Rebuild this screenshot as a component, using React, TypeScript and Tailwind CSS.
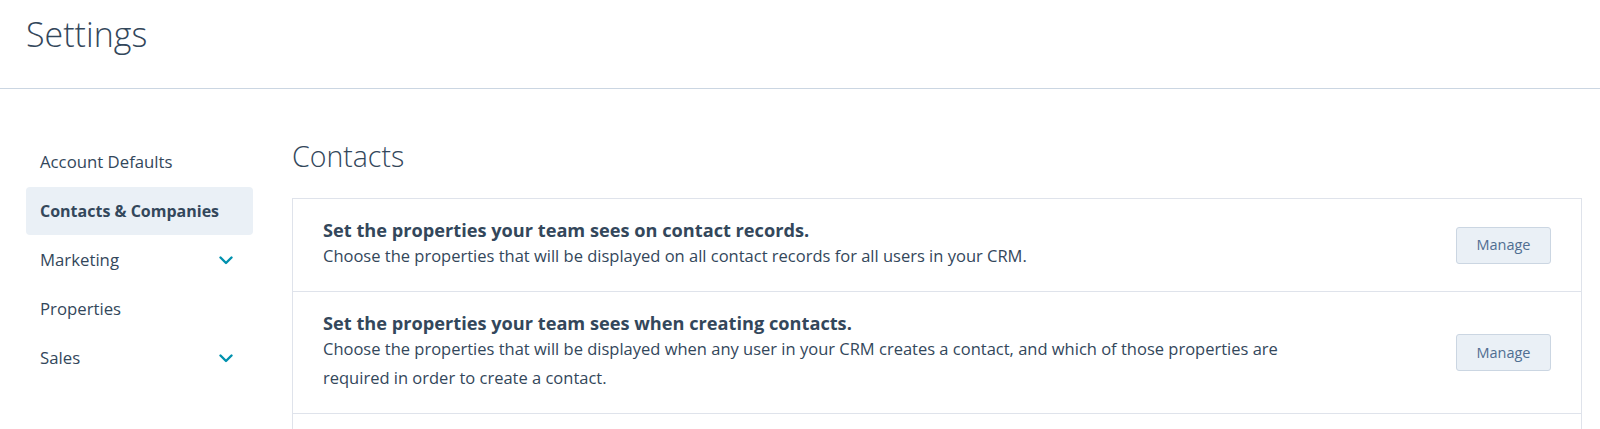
import React from 'react';

const navItems = [
  { label: 'Account Defaults', active: false, caret: false },
  { label: 'Contacts & Companies', active: true, caret: false },
  { label: 'Marketing', active: false, caret: true },
  { label: 'Properties', active: false, caret: false },
  { label: 'Sales', active: false, caret: true },
];

const rows = [
  {
    title: 'Set the properties your team sees on contact records.',
    body: 'Choose the properties that will be displayed on all contact records for all users in your CRM.',
  },
  {
    title: 'Set the properties your team sees when creating contacts.',
    body: 'Choose the properties that will be displayed when any user in your CRM creates a contact, and which of those properties are required in order to create a contact.',
  },
];

const Chevron = () => (
  <svg width="14" height="9" viewBox="0 0 14 9" fill="none">
    <path d="M1.5 1.5L7 7l5.5-5.5" stroke="#0091ae" strokeWidth="2.4" strokeLinecap="round" strokeLinejoin="round" />
  </svg>
);

export default function App() {
  return (
    <div className="min-h-[429px] bg-white text-[#33475b] font-['Open_Sans',sans-serif]">
      <header className="h-[89px] border-b border-[#cbd6e2] pl-[26px] pt-[14px]">
        <h1 className="text-[34px] leading-[40px] font-light">Settings</h1>
      </header>

      <div className="flex pt-[49px]">
        <nav className="w-[227px] ml-[26px] flex flex-col gap-[1px]">
          {navItems.map((item) => (
            <div
              key={item.label}
              className={`h-[48px] flex items-center justify-between pl-[14px] pr-[20px] rounded-[4px] ${
                item.active ? 'bg-[#eaf0f6] font-bold text-[16px]' : 'text-[16.75px]'
              }`}
            >
              <span>{item.label}</span>
              {item.caret && <Chevron />}
            </div>
          ))}
        </nav>

        <main className="flex-1 ml-[39px] mr-[18px]">
          <h2 className="text-[28.5px] leading-[36px] font-light mb-[24px]">Contacts</h2>
          <div className="border border-[#dfe3eb] border-b-0">
            {rows.map((row) => (
              <div
                key={row.title}
                className="flex items-center justify-between border-b border-[#dfe3eb] pl-[30px] pr-[30px] pt-[21px] pb-[21px]"
              >
                <div className="max-w-[980px]">
                  <p className="text-[18.2px] leading-[21px] font-bold">{row.title}</p>
                  <p className="text-[16.5px] leading-[29px]">{row.body}</p>
                </div>
                <button className="w-[95px] h-[37px] shrink-0 rounded-[3px] border border-[#cbd6e2] bg-[#eaf0f6] text-[14.5px] text-[#506e91]">
                  Manage
                </button>
              </div>
            ))}
            <div className="h-[20px]" />
          </div>
        </main>
      </div>
    </div>
  );
}
